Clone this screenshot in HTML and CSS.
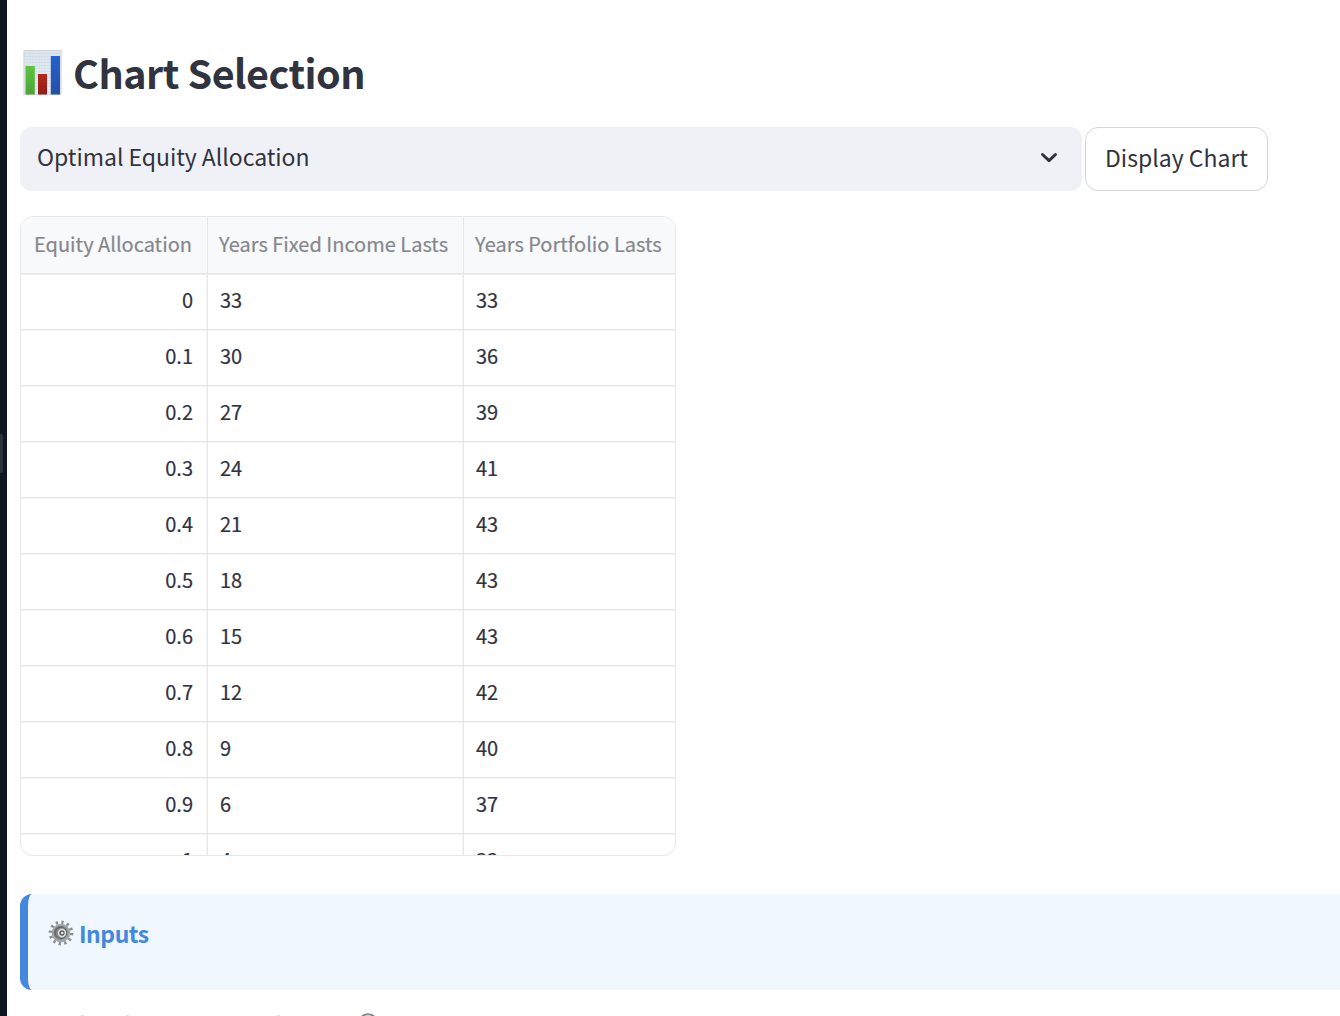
FILE: index.html
```html
<!DOCTYPE html>
<html lang="en">
<head>
<meta charset="utf-8">
<title>Chart Selection</title>
<link rel="stylesheet" href="styles.css">
</head>
<body>
<aside class="sidebar"><div class="handle"></div></aside>
<main class="main">
  <h2 class="title">
    <svg class="chart-icon" viewBox="0 0 38 45">
      <defs>
        <linearGradient id="paper" x2="0" y2="1"><stop stop-color="#dbe5ee"/><stop offset="1" stop-color="#edf1f6"/></linearGradient>
        <linearGradient id="green" x2="0" y2="1"><stop stop-color="#5cc43f"/><stop offset="1" stop-color="#4ca536"/></linearGradient>
        <linearGradient id="red" x2="0" y2="1"><stop stop-color="#b5291c"/><stop offset="1" stop-color="#941b15"/></linearGradient>
        <linearGradient id="blue" x2="0" y2="1"><stop stop-color="#2861cd"/><stop offset="1" stop-color="#2450a5"/></linearGradient>
        <pattern id="ruled" width="3" height="3" patternUnits="userSpaceOnUse"><path d="M0 .5h3M.5 0v3" stroke="#c8d7e4" stroke-width=".4"/></pattern>
      </defs>
      <path fill="url(#paper)" d="M0 0h38v45H0z"/>
      <path fill="url(#ruled)" stroke="#d3d5d8" d="M.5.5h37v44H.5z"/>
      <path fill="url(#green)" d="M2 16h9.300v28.500H2z"/>
      <path fill="url(#red)" d="M14.500 24h9v20.500h-9z"/>
      <path fill="url(#blue)" d="M27.300 6h9.200v38.500h-9.200z"/>
    </svg>
    <span>Chart Selection</span>
  </h2>
  <div class="controls">
    <div class="select"><span>Optimal Equity Allocation</span>
      <svg class="chevron" viewBox="0 0 18 12"><path d="M2.500 2.500 9 8.700l6.500-6.200"/></svg>
    </div>
    <button class="button">Display Chart</button>
  </div>
  <div class="table">
    <div class="row head"><span>Equity Allocation</span><span>Years Fixed Income Lasts</span><span>Years Portfolio Lasts</span></div>
    <div class="row"><span>0</span><span>33</span><span>33</span></div>
    <div class="row"><span>0.1</span><span>30</span><span>36</span></div>
    <div class="row"><span>0.2</span><span>27</span><span>39</span></div>
    <div class="row"><span>0.3</span><span>24</span><span>41</span></div>
    <div class="row"><span>0.4</span><span>21</span><span>43</span></div>
    <div class="row"><span>0.5</span><span>18</span><span>43</span></div>
    <div class="row"><span>0.6</span><span>15</span><span>43</span></div>
    <div class="row"><span>0.7</span><span>12</span><span>42</span></div>
    <div class="row"><span>0.8</span><span>9</span><span>40</span></div>
    <div class="row"><span>0.9</span><span>6</span><span>37</span></div>
    <div class="row"><span>1</span><span>4</span><span>33</span></div>
  </div>
  <section class="inputs">
    <svg class="gear" viewBox="-13 -13 26 26">
      <defs><linearGradient id="steel" x2="1" y2="1"><stop stop-color="#666"/><stop offset="1" stop-color="#aaa"/></linearGradient></defs>
      <circle r="10.700" fill="none" stroke="#8b8f94" stroke-width="3.400" stroke-dasharray="2.300 3.302"/>
      <circle r="8.300" fill="url(#steel)" stroke="#a3a6aa" stroke-width="2"/>
      <circle r="5.700" fill="#858789" stroke="#626466"/>
      <circle cx="1" r="3.400" fill="#555" stroke="#e4e6e8" stroke-width="1.500"/>
      <circle cx="1.200" r="1.300" fill="#e8f1fa"/>
    </svg>
    <h3>Inputs</h3>
  </section>
  <div class="next-field">
    <i></i><i></i><i></i>
    <svg class="help" viewBox="0 0 22 22"><circle cx="11" cy="11" r="9.800"/></svg>
  </div>
</main>
</body>
</html>
```
FILE: styles.css
```css
* { box-sizing: border-box; }
body {
  margin: 0;
  height: 1016px;
  display: flex;
  overflow: hidden;
  background: #fff;
  color: #31333f;
  font-family: "Noto Sans CJK SC", "Noto Sans", sans-serif;
}
.sidebar { width: 7px; flex: none; background: #0e1525; padding-top: 434px; }
.handle { width: 3px; height: 39px; background: #2a3040; border-radius: 0 2px 2px 0; }
.main { flex: 1; min-width: 0; height: 1016px; overflow: hidden; padding: 50px 0 0 13px; }
.title {
  margin: 0; height: 45px; padding-left: 3px;
  display: flex; align-items: center; gap: 11px;
  font-size: 39.5px; line-height: 43px; font-weight: 700; white-space: nowrap;
  letter-spacing: -.48px;
}
.title span { padding-bottom: 2px; }
.chart-icon { width: 39px; height: 45px; flex: none; }
.controls { display: flex; gap: 3px; margin-top: 32px; height: 64px; }
.select {
  width: 1062px; padding: 0 24px 2px 17px; border-radius: 12px;
  background: #f0f1f6; display: flex; align-items: center; justify-content: space-between;
  font-size: 23px; letter-spacing: -.04px;
}
.select span { padding-bottom: 5px; }
.chevron { width: 18px; height: 12px; fill: none; stroke: #31333f; stroke-width: 3; stroke-linecap: round; stroke-linejoin: round; }
.button {
  width: 183px; padding: 0 0 5px; border: 1px solid #d5d6d9; border-radius: 13px;
  background: #fff; color: inherit; font: inherit; font-size: 23px;
}
.table {
  width: 656px; height: 640px; margin-top: 25px; overflow: hidden;
  border: 1px solid #e6e7e9; border-radius: 13px;
  font-size: 20px;
}
.row { display: grid; grid-template-columns: 187px 256px 211px; height: 56px; }
.row span {
  display: flex; align-items: center; padding: 0 0 5px 12px;
  border-right: 1px solid #e6e7e9; border-bottom: 1px solid #e6e7e9;
  box-shadow: inset -1px 1px #f5f5f6;
  -webkit-text-stroke: .2px currentColor; white-space: nowrap;
}
.row span:first-child { justify-content: flex-end; padding-right: 14px; }
.row span:last-child { border-right: 0; box-shadow: inset 0 1px #f5f5f6; }
.row.head { height: 57px; background: #f8f9fb; color: #86878d; }
.row.head span { padding-left: 11px; padding-bottom: 4px; box-shadow: none; }
.row.head span:first-child { justify-content: flex-start; padding-left: 13px; }
.head + .row span { box-shadow: inset 0 1px #ebecee, inset -1px 0 #f5f5f6; }
.head + .row span:last-child { box-shadow: inset 0 1px #ebecee; }
.inputs {
  display: flex; gap: 5px; height: 96px; margin-top: 38px; padding: 22px 0 0 20px;
  background: #f0f7ff; border-left: 8px solid #4387df; border-radius: 12px 0 0 12px;
}
.gear { width: 26px; height: 26px; margin-top: 4px; }
.inputs h3 { margin: 0; font-size: 23px; line-height: 34px; letter-spacing: -.5px; color: #4387df; }
.next-field { display: flex; height: 26px; padding: 25px 0 0 61px; }
.next-field i { width: 3px; height: 1px; background: #e0e0e5; margin-right: 42px; }
.next-field i:nth-child(2) { margin-right: 148px; }
.next-field i:nth-child(3) { margin-right: 77px; }
.help { width: 22px; height: 22px; margin-top: -2px; flex: none; fill: none; stroke: #85868c; stroke-width: 2; }
```
